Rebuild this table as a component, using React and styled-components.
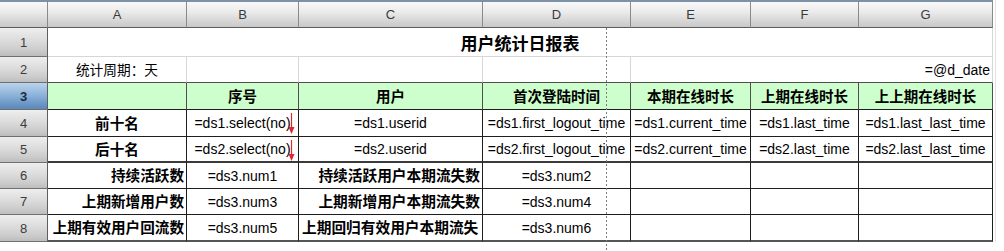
import styled, { createGlobalStyle } from 'styled-components';

const GlobalStyle = createGlobalStyle`
  html, body { margin: 0; padding: 0; background: #fff; }
  * { box-sizing: border-box; }
`

const Page = styled.div`
  position: relative;
  width: 1004px;
  height: 251px;
  overflow: hidden;
  background: #fff;
`

const Sheet = styled.div`
  display: grid;
  grid-template-columns: 48px 139px 112px 184px 148px 120px 108px 134px;
  grid-template-rows: 28px 29px 26px 27px 27px 26px 26px 26px 27px;
  width: 993px;
  box-shadow: 2px 0 0 #fff, 3px 0 0 #e2e2e2;
`

const ColHead = styled.div`
  display: flex;
  align-items: center;
  justify-content: center;
  border-top: 2px solid #7e92a7;
  border-right: 1px solid #8a8a8a;
  border-bottom: 1px solid #5c5c5c;
  background: linear-gradient(#f8f8f8, #ebebeb 40%, #d6d6d6 75%, #c9c9c9);
  font: 13px "Liberation Sans", sans-serif;
  color: #3a3a3a;
`

const RowHead = styled.div`
  display: flex;
  align-items: center;
  justify-content: center;
  border-right: 1px solid #5e5e5e;
  border-bottom: 1px solid #707070;
  background: ${p => p.$active
    ? 'linear-gradient(#b9d3ec, #8fb4da 45%, #6b97c6 80%, #5d89b9)'
    : 'linear-gradient(#eeeeee, #dcdcdc 45%, #cbcbcb 80%, #bdbdbd)'};
  font: 13px "Liberation Sans", sans-serif;
  font-weight: ${p => p.$active ? 700 : 400};
  color: ${p => p.$active ? '#1c2c40' : '#3c3c3c'};
`

const tones = {
  plain: { bg: '#fff', right: '#d6d6d6', bottom: '1px solid #d6d6d6' },
  edge: { bg: '#fff', right: '#d6d6d6', bottom: '1px solid #4f4f4f' },
  head: { bg: '#ccffcc', right: '#505050', bottom: '1px solid #1e1e1e' },
  data: { bg: '#fff', right: '#1e1e1e', bottom: '1px solid #1e1e1e' },
  split: { bg: '#fff', right: '#1e1e1e', bottom: '2px solid #3a3a3a' },
  last: { bg: '#fff', right: '#1e1e1e', bottom: '2px solid #555' },
}

const Cell = styled.div`
  position: relative;
  display: flex;
  align-items: center;
  justify-content: ${p => p.$align === 'left' ? 'flex-start' : p.$align === 'right' ? 'flex-end' : 'center'};
  grid-column: span ${p => p.$span || 1};
  padding: 0 2px 0 ${p => p.$align === 'left' ? 3 : 2}px;
  overflow: hidden;
  white-space: nowrap;
  background: ${p => tones[p.$tone].bg};
  border-right: 1px solid ${p => tones[p.$tone].right};
  border-bottom: ${p => tones[p.$tone].bottom};
  font-family: ${p => p.$cjk ? '"Noto Sans CJK SC", sans-serif' : '"Liberation Sans", "Noto Sans CJK SC", sans-serif'};
  font-size: ${p => p.$size || 14}px;
  font-weight: ${p => p.$bold ? 700 : 400};
  line-height: 1;
  color: #000;
`

const PageBreak = styled.div`
  position: absolute;
  left: 606px;
  top: 28px;
  bottom: 0;
  width: 1px;
  background: repeating-linear-gradient(to bottom, #7c7c7c 0 2px, transparent 2px 4px);
`

const Marker = styled.svg`
  position: absolute;
  right: 3px;
  top: 3px;
`

const DownArrow = () => (
  <Marker width="7" height="21" viewBox="0 0 7 21">
    <line x1="3.5" y1="0" x2="3.5" y2="16" stroke="#e3262b" strokeWidth="1.2" />
    <polygon points="0.5,14 6.5,14 3.5,21" fill="#e3262b" />
  </Marker>
)

const cols = ['A', 'B', 'C', 'D', 'E', 'F', 'G']

const dataRows = [
  { tone: 'data', a: '前十名', aAlign: 'center', arrow: true, cells: ['=ds1.select(no)', '=ds1.userid', '=ds1.first_logout_time', '=ds1.current_time', '=ds1.last_time', '=ds1.last_last_time'] },
  { tone: 'split', a: '后十名', aAlign: 'center', arrow: true, cells: ['=ds2.select(no)', '=ds2.userid', '=ds2.first_logout_time', '=ds2.current_time', '=ds2.last_time', '=ds2.last_last_time'] },
  { tone: 'data', a: '持续活跃数', aAlign: 'right', b: '=ds3.num1', c: '持续活跃用户本期流失数', cAlign: 'right', d: '=ds3.num2' },
  { tone: 'data', a: '上期新增用户数', aAlign: 'right', b: '=ds3.num3', c: '上期新增用户本期流失数', cAlign: 'right', d: '=ds3.num4' },
  { tone: 'last', a: '上期有效用户回流数', aAlign: 'right', b: '=ds3.num5', c: '上期回归有效用户本期流失', cAlign: 'left', d: '=ds3.num6' },
]

const App = () => {
  return (
    <Page>
      <GlobalStyle />
      <Sheet>
        <ColHead />
        {cols.map(c => <ColHead key={c}>{c}</ColHead>)}

        <RowHead>1</RowHead>
        <Cell $tone="plain" $span={7} $cjk $bold $size={17}>用户统计日报表</Cell>

        <RowHead>2</RowHead>
        <Cell $tone="edge" $cjk $size={13.7}>统计周期：天</Cell>
        <Cell $tone="edge" />
        <Cell $tone="edge" />
        <Cell $tone="edge" />
        <Cell $tone="edge" $span={3} $align="right">=@d_date</Cell>

        <RowHead $active>3</RowHead>
        <Cell $tone="head" />
        {['序号', '用户', '首次登陆时间', '本期在线时长', '上期在线时长', '上上期在线时长'].map(t => (
          <Cell key={t} $tone="head" $cjk $bold $size={14.5}>{t}</Cell>
        ))}

        {dataRows.map((r, i) => [
          <RowHead key={'h' + i}>{i + 4}</RowHead>,
          <Cell key={'a' + i} $tone={r.tone} $cjk $bold $size={14.6} $align={r.aAlign}>{r.a}</Cell>,
          ...(r.cells
            ? r.cells.map((t, j) => (
              <Cell key={i + '-' + j} $tone={r.tone}>
                {t}
                {j === 0 && r.arrow && <DownArrow />}
              </Cell>
            ))
            : [
              <Cell key={'b' + i} $tone={r.tone}>{r.b}</Cell>,
              <Cell key={'c' + i} $tone={r.tone} $cjk $bold $size={14.7} $align={r.cAlign}>{r.c}</Cell>,
              <Cell key={'d' + i} $tone={r.tone}>{r.d}</Cell>,
              <Cell key={'e' + i} $tone={r.tone} />,
              <Cell key={'f' + i} $tone={r.tone} />,
              <Cell key={'g' + i} $tone={r.tone} />,
            ]),
        ])}
      </Sheet>
      <PageBreak />
    </Page>
  )
}

export default App;
